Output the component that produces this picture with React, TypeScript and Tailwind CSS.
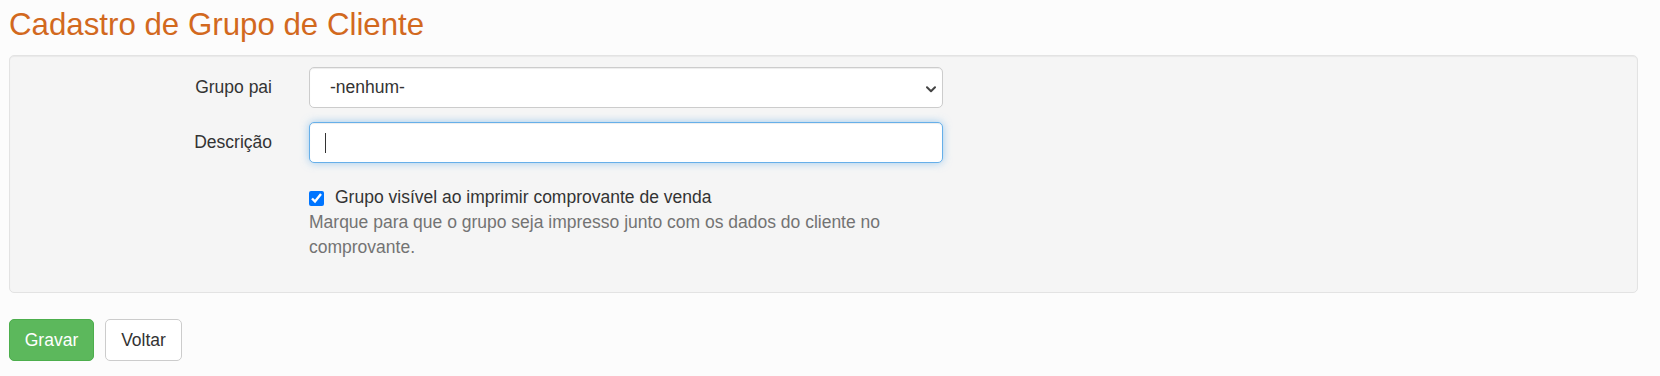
import React from "react";

export default function App() {
  return (
    <div
      className="min-h-screen bg-[#fcfcfc] pl-[9px] pr-[22px] pt-[8px] text-[#333333]"
      style={{ fontFamily: '"Liberation Sans", Arial, Helvetica, sans-serif' }}
    >
      <h3 className="m-0 text-[31.25px] leading-[33px] font-normal text-[#d2691e]">
        Cadastro de Grupo de Cliente
      </h3>

      <div className="mt-[14px] h-[238px] rounded-[5px] border border-[#e3e3e3] bg-[#f5f5f5] pt-[11px] shadow-[inset_0_1px_1px_rgba(0,0,0,0.05)]">
        {/* Grupo pai */}
        <div className="flex">
          <label className="w-[262px] pt-[8px] text-right text-[17.5px] leading-[25px]">
            Grupo pai
          </label>
          <div className="relative ml-[37px] h-[41px] w-[634px]">
            <select
              defaultValue="nenhum"
              className="h-full w-full appearance-none rounded-[5px] border border-[#cccccc] bg-white pl-[20px] pr-[30px] text-[17.5px] leading-[25px] text-[#333333] shadow-[inset_0_1px_1px_rgba(0,0,0,0.075)] outline-none"
              style={{ fontFamily: '"Liberation Sans", Arial, Helvetica, sans-serif' }}
            >
              <option value="nenhum">-nenhum-</option>
            </select>
            <svg
              className="pointer-events-none absolute right-[7px] top-[19px]"
              width="10"
              height="7"
              viewBox="0 0 10 7"
              fill="none"
            >
              <path d="M1 1.2 L5 5.2 L9 1.2" stroke="#444444" strokeWidth="2" strokeLinecap="round" strokeLinejoin="round" />
            </svg>
          </div>
        </div>

        {/* Descrição */}
        <div className="mt-[14px] flex">
          <label className="w-[262px] pt-[8px] text-right text-[17.5px] leading-[25px]">
            Descrição
          </label>
          <div className="ml-[37px] flex h-[41px] w-[634px] items-center rounded-[5px] border border-[#66afe9] bg-white pl-[15px] shadow-[inset_0_1px_1px_rgba(0,0,0,0.075),0_0_8px_rgba(102,175,233,0.6)]">
            <div className="h-[20px] w-[1px] bg-[#333333]" />
          </div>
        </div>

        {/* Checkbox */}
        <div className="mt-[22px] ml-[299px] w-[634px]">
          <label className="flex items-start text-[17.5px] leading-[25px]">
            <input
              type="checkbox"
              defaultChecked
              className="m-0 mt-[6px] h-[15px] w-[15px] accent-[#0075ff]"
            />
            <span className="ml-[11px]">Grupo visível ao imprimir comprovante de venda</span>
          </label>
          <p className="m-0 text-[17.5px] leading-[25px] text-[#737373]">
            Marque para que o grupo seja impresso junto com os dados do cliente no comprovante.
          </p>
        </div>
      </div>

      <div className="mt-[26px] flex gap-[11px]">
        <button className="h-[42px] w-[85px] rounded-[5px] border border-[#4cae4c] bg-[#5cb85c] text-[17.5px] leading-[25px] text-white">
          Gravar
        </button>
        <button className="h-[42px] w-[77px] rounded-[5px] border border-[#cccccc] bg-white text-[17.5px] leading-[25px] text-[#333333]">
          Voltar
        </button>
      </div>
    </div>
  );
}
